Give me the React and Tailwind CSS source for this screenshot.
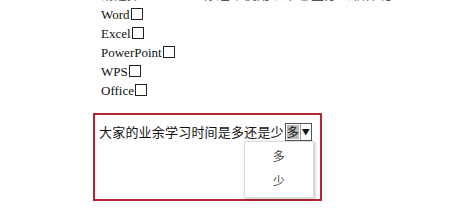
import React from "react";

function Box() {
  return (
    <span className="inline-block w-[12px] h-[12px] border border-[#222] bg-white align-[-1px] ml-[1px]" />
  );
}

export default function App() {
  const items = ["Word", "Excel", "PowerPoint", "WPS", "Office"];
  return (
    <div className="w-[468px] h-[224px] bg-white overflow-hidden text-[#111]">
      <div
        className="pl-[101px] text-[13px] leading-[19px] -mt-[14px]"
        style={{ fontFamily: '"Liberation Serif", "Noto Sans CJK SC", serif' }}
      >
        <div className="flex items-start h-[19px] leading-[18px] overflow-hidden">
          <span className="text-[#555]">请选择：</span>
          <span className="ml-[50px] text-[#555] tracking-[0.5px]">你经常使用以下哪些办公软件呢</span>
          <Box />
        </div>
        {items.map((t) => (
          <div key={t}>
            {t}
            <Box />
          </div>
        ))}
      </div>
      <div
        className="ml-[93px] mt-[13px] w-[229px] h-[88px] border-2 border-[#b0282d] pl-[4px] pt-[8px]"
        style={{ fontFamily: '"Noto Sans CJK SC", sans-serif' }}
      >
        <div className="flex items-center h-[18px]">
          <span className="text-[13px] leading-[18px] tracking-[0.2px] text-[#111]">
            大家的业余学习时间是多还是少
          </span>
          <div className="relative ml-[1px]">
            <div className="flex items-center w-[27px] h-[18px] border border-[#555] bg-white">
              <span className="ml-[1px] h-[14px] w-[12px] bg-[#b8b8b8] text-[12px] leading-[14px] text-[#111] flex items-center justify-center">
                多
              </span>
              <span className="ml-[1px] flex-1 h-[16px] border-l border-[#999] flex items-center justify-center text-[8px] text-[#111]">
                ▼
              </span>
            </div>
            <div className="absolute left-[-41px] top-[18px] w-[70px] h-[57px] bg-white border border-[#ddd] shadow-[1px_1px_3px_rgba(0,0,0,0.25)] flex flex-col items-center text-[12px] text-[#444]">
              <div className="mt-[6px] leading-[16px]">多</div>
              <div className="mt-[9px] leading-[16px]">少</div>
            </div>
          </div>
        </div>
      </div>
    </div>
  );
}
